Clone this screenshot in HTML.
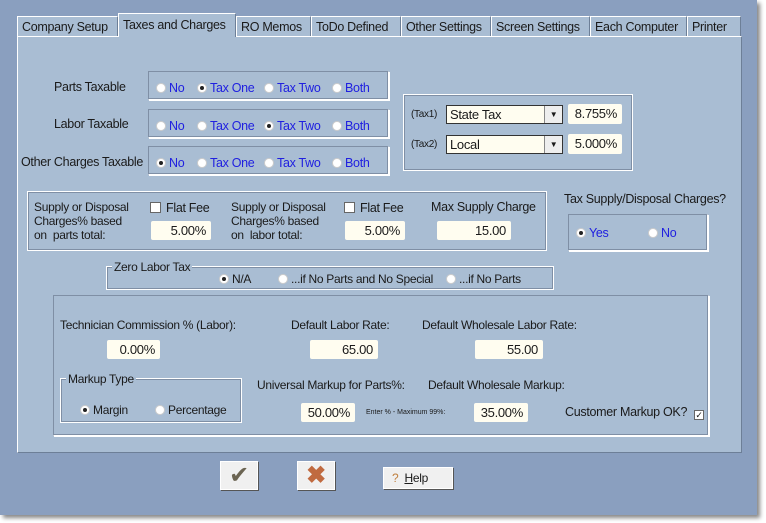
<!DOCTYPE html><html><head><style>
body{margin:0;width:766px;height:523px;background:#fff;position:relative;overflow:hidden;font-family:"Liberation Sans",sans-serif;font-size:12px;letter-spacing:-0.3px;color:#1a1a1a}
.a{position:absolute;white-space:nowrap}
#win{left:0;top:0;width:757px;height:515px;background:#8a9fbf;box-shadow:3px 3px 4px #888}
.tab{position:absolute;top:16px;height:20px;background:#a9bdd3;border:1px solid #fff;border-bottom:none;border-right:1px solid #6d7f97;font-size:12.5px;line-height:20px;padding-left:4px;box-sizing:border-box;white-space:nowrap;overflow:hidden}
#panel{left:17px;top:36px;width:725px;height:417px;background:#a9bdd3;border-top:1px solid #fff;border-left:1px solid #fff;border-right:1px solid #6d7f97;border-bottom:1px solid #6d7f97;box-sizing:border-box}
.box{position:absolute;border:1px solid #fff;outline:1px solid #7f8fa5;outline-offset:-2px;box-sizing:border-box}
.rb{position:absolute;box-sizing:border-box;border:1px solid #7f8fa5;border-right-color:#fff;border-bottom-color:#fff;box-shadow:inset -1px -1px 0 #7f8fa5,1px 1px 0 #fff}
.r{display:inline-block;width:8px;height:8px;border-radius:50%;background:#fff;border:1px solid #ccc;position:relative;vertical-align:-1px;margin-right:3px}
.r.on:after{content:"";position:absolute;left:2px;top:2px;width:4px;height:4px;border-radius:50%;background:#222}
.b{color:#2020e0;font-size:12.5px}
.in{position:absolute;background:#fffdf0;border-radius:2px;text-align:right;font-size:13px;line-height:19px;height:19px;padding-right:5px;box-sizing:border-box}
.cb{display:inline-block;width:9px;height:9px;background:#fff;border:1px solid #666;vertical-align:-1px;margin-right:5px;font-size:9px;line-height:9px;text-align:center}
.btn{position:absolute;background:#f0f0f0;border:1px solid #fff;box-shadow:1px 1px 0 #555;box-sizing:border-box}
</style></head><body>
<div id="win" class="a"></div>
<div class="tab" style="left:17px;width:101px">Company Setup</div>
<div class="tab" style="left:236px;width:75px">RO Memos</div>
<div class="tab" style="left:311px;width:90px">ToDo Defined</div>
<div class="tab" style="left:401px;width:90px">Other Settings</div>
<div class="tab" style="left:491px;width:99px">Screen Settings</div>
<div class="tab" style="left:590px;width:97px">Each Computer</div>
<div class="tab" style="left:687px;width:54px">Printer</div>
<div id="panel" class="a"></div>
<div class="tab" style="left:118px;top:13px;width:118px;height:24px;line-height:22px;border-right:1px solid #6d7f97">Taxes and Charges</div>

<div class="a" style="left:54px;top:80px;font-size:12.5px">Parts Taxable</div>
<div class="a" style="left:54px;top:117px;font-size:12.5px">Labor Taxable</div>
<div class="a" style="left:21px;top:155px;font-size:12.5px">Other Charges Taxable</div>

<div class="rb" style="left:148px;top:71px;width:241px;height:29px"></div>
<div class="a" style="left:156px;top:81px"><span class="r"></span><span class="b">No</span></div>
<div class="a" style="left:197px;top:81px"><span class="r on"></span><span class="b">Tax One</span></div>
<div class="a" style="left:264px;top:81px"><span class="r"></span><span class="b">Tax Two</span></div>
<div class="a" style="left:332px;top:81px"><span class="r"></span><span class="b">Both</span></div>

<div class="rb" style="left:148px;top:109px;width:241px;height:29px"></div>
<div class="a" style="left:156px;top:119px"><span class="r"></span><span class="b">No</span></div>
<div class="a" style="left:197px;top:119px"><span class="r"></span><span class="b">Tax One</span></div>
<div class="a" style="left:264px;top:119px"><span class="r on"></span><span class="b">Tax Two</span></div>
<div class="a" style="left:332px;top:119px"><span class="r"></span><span class="b">Both</span></div>

<div class="rb" style="left:148px;top:146px;width:241px;height:29px"></div>
<div class="a" style="left:156px;top:156px"><span class="r on"></span><span class="b">No</span></div>
<div class="a" style="left:197px;top:156px"><span class="r"></span><span class="b">Tax One</span></div>
<div class="a" style="left:264px;top:156px"><span class="r"></span><span class="b">Tax Two</span></div>
<div class="a" style="left:332px;top:156px"><span class="r"></span><span class="b">Both</span></div>

<div class="box" style="left:403px;top:94px;width:230px;height:77px"></div>
<div class="a" style="left:411px;top:109px;font-size:10px">(Tax1)</div>
<div class="a" style="left:411px;top:139px;font-size:10px">(Tax2)</div>
<div class="a" style="left:446px;top:105px;width:117px;height:19px;background:#fffdf0;border:1px solid #333;box-sizing:border-box;font-size:13px;line-height:17px;padding-left:3px">State Tax<div class="a" style="right:0;top:0;width:17px;height:17px;background:#eee;border-left:1px solid #888;text-align:center;font-size:8px;line-height:17px">▼</div></div>
<div class="a" style="left:446px;top:135px;width:117px;height:19px;background:#fffdf0;border:1px solid #333;box-sizing:border-box;font-size:13px;line-height:17px;padding-left:3px">Local<div class="a" style="right:0;top:0;width:17px;height:17px;background:#eee;border-left:1px solid #888;text-align:center;font-size:8px;line-height:17px">▼</div></div>
<div class="in" style="left:568px;top:104px;width:54px;height:20px">8.755%</div>
<div class="in" style="left:568px;top:134px;width:54px;height:20px">5.000%</div>

<div class="box" style="left:27px;top:191px;width:520px;height:60px"></div>
<div class="a" style="left:34px;top:200px;line-height:14px">Supply or Disposal<br>Charges% based<br>on &nbsp;parts total:</div>
<div class="a" style="left:150px;top:201px;font-size:12.5px"><span class="cb"></span>Flat Fee</div>
<div class="in" style="left:151px;top:221px;width:60px">5.00%</div>
<div class="a" style="left:231px;top:200px;line-height:14px">Supply or Disposal<br>Charges% based<br>on &nbsp;labor total:</div>
<div class="a" style="left:344px;top:201px;font-size:12.5px"><span class="cb"></span>Flat Fee</div>
<div class="in" style="left:345px;top:221px;width:60px">5.00%</div>
<div class="a" style="left:431px;top:200px;font-size:12.5px">Max Supply Charge</div>
<div class="in" style="left:437px;top:221px;width:74px">15.00</div>

<div class="a" style="left:564px;top:192px;font-size:12.5px">Tax Supply/Disposal Charges?</div>
<div class="rb" style="left:568px;top:214px;width:140px;height:37px"><div class="a" style="left:7px;top:11px"><span class="r on"></span><span class="b">Yes</span></div><div class="a" style="left:79px;top:11px"><span class="r"></span><span class="b">No</span></div></div>

<div class="box" style="left:106px;top:266px;width:448px;height:24px"></div>
<div class="a" style="left:112px;top:260px;background:#a9bdd3;padding:0 2px">Zero Labor Tax</div>
<div class="a" style="left:219px;top:272px"><span class="r on"></span>N/A</div>
<div class="a" style="left:278px;top:272px"><span class="r"></span>...if No Parts and No Special</div>
<div class="a" style="left:446px;top:272px"><span class="r"></span>...if No Parts</div>

<div class="rb" style="left:53px;top:295px;width:656px;height:141px"></div>
<div class="a" style="left:60px;top:318px">Technician Commission % (Labor):</div>
<div class="in" style="left:107px;top:340px;width:53px">0.00%</div>
<div class="a" style="left:291px;top:318px">Default Labor Rate:</div>
<div class="in" style="left:310px;top:340px;width:68px">65.00</div>
<div class="a" style="left:422px;top:318px">Default Wholesale Labor Rate:</div>
<div class="in" style="left:475px;top:340px;width:68px">55.00</div>
<div class="box" style="left:60px;top:378px;width:182px;height:45px"></div>
<div class="a" style="left:66px;top:372px;background:#a9bdd3;padding:0 2px">Markup Type</div>
<div class="a" style="left:80px;top:403px"><span class="r on"></span>Margin</div>
<div class="a" style="left:155px;top:403px"><span class="r"></span>Percentage</div>
<div class="a" style="left:257px;top:378px">Universal Markup for Parts%:</div>
<div class="a" style="left:428px;top:378px">Default Wholesale Markup:</div>
<div class="in" style="left:301px;top:403px;width:54px">50.00%</div>
<div class="a" style="left:366px;top:409px;font-size:7px;letter-spacing:0">Enter % - Maximum 99%:</div>
<div class="in" style="left:474px;top:403px;width:54px">35.00%</div>
<div class="a" style="left:565px;top:405px;font-size:12.5px">Customer Markup OK?</div>
<div class="a" style="left:694px;top:406px"><span class="cb" style="width:8px;height:8px">✓</span></div>

<div class="btn" style="left:220px;top:461px;width:38px;height:29px;text-align:center;font-size:24px;line-height:27px;color:#6b6452">✔</div>
<div class="btn" style="left:297px;top:461px;width:38px;height:29px;text-align:center;font-size:24px;line-height:27px;color:#c06a40;font-weight:bold">✖</div>
<div class="btn" style="left:383px;top:467px;width:70px;height:22px;font-size:12px;line-height:20px"><span style="color:#c08040;margin-left:8px">?</span>&nbsp;&nbsp;<u>H</u>elp</div>
</body></html>
